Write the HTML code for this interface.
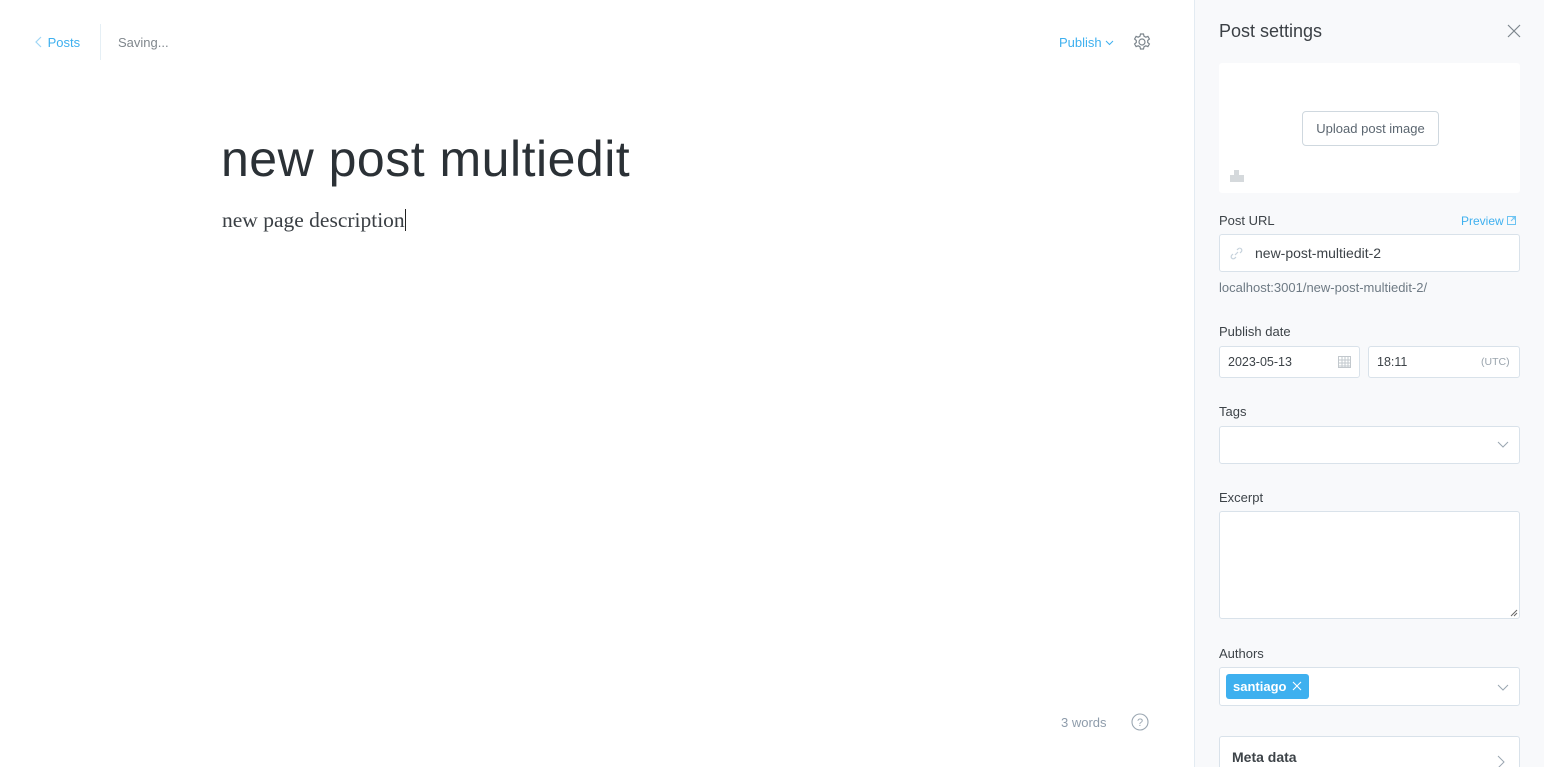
<!DOCTYPE html>
<html><head><meta charset="utf-8"><style>
*{box-sizing:border-box;margin:0;padding:0}
html,body{width:1544px;height:767px;overflow:hidden}
body{background:#fff;font-family:"Liberation Sans",sans-serif;position:relative}
.abs{position:absolute}
.side{left:1194px;top:0;width:350px;height:767px;background:#f8f9fb;border-left:1px solid #e3ebf2;overflow:hidden}
.lbl{position:absolute;left:24px;font-size:13px;color:#3d4348}
.box{position:absolute;left:24px;width:301px;background:#fff;border:1px solid #d9e2ea;border-radius:3px}
</style></head><body>
<div class="abs" style="left:34px;top:35px;font-size:13px;color:#3eb0ef">
<svg width="10" height="14" style="vertical-align:-2px"><path d="M7 2 L2 7 L7 12" stroke="#9fd6f5" fill="none" stroke-width="1.2"/></svg> Posts</div>
<div class="abs" style="left:100px;top:24px;width:1px;height:36px;background:#e5eff5"></div>
<div class="abs" style="left:118px;top:35px;font-size:13px;color:#80878d">Saving...</div>
<div class="abs" style="left:1059px;top:35px;font-size:13px;color:#3eb0ef">Publish <svg width="9" height="6" style="vertical-align:1px"><path d="M1 1 L4.5 4.5 L8 1" stroke="#3eb0ef" fill="none"/></svg></div>
<svg class="abs" style="left:1132px;top:32px" width="20" height="20" viewBox="0 0 20 20"><circle cx="10" cy="10" r="3" stroke="#7d868d" fill="none" stroke-width="1.2"/><path d="M8.5 2h3l.5 2.2 1.8 1 2.1-.8 1.5 2.6-1.7 1.5v2l1.7 1.5-1.5 2.6-2.1-.8-1.8 1-.5 2.2h-3l-.5-2.2-1.8-1-2.1.8-1.5-2.6 1.7-1.5v-2L2.6 7l1.5-2.6 2.1.8 1.8-1z" stroke="#7d868d" fill="none" stroke-width="1.2"/></svg>
<div class="abs" style="left:221px;top:130px;font-size:50px;color:#2b3136;letter-spacing:0.5px">new post multiedit</div>
<div class="abs" style="left:222px;top:208px;font-family:'Liberation Serif',serif;font-size:21.5px;color:#3a3f44">new page description<span style="display:inline-block;width:1px;height:22px;background:#222;vertical-align:-4px"></span></div>
<div class="abs" style="left:1061px;top:715px;font-size:13px;color:#8e9cab">3 words</div>
<svg class="abs" style="left:1131px;top:713px" width="18" height="18"><circle cx="9" cy="9" r="8" stroke="#9aa6b1" fill="none" stroke-width="1.1"/><text x="9" y="13" font-size="11" text-anchor="middle" fill="#9aa6b1" font-family="Liberation Sans">?</text></svg>

<div class="abs side">
<div class="abs" style="left:24px;top:21px;font-size:18px;color:#3b4045">Post settings</div>
<svg class="abs" style="left:312px;top:24px" width="14" height="14"><path d="M1 1L13 13M13 1L1 13" stroke="#7d868d" stroke-width="1.2"/></svg>
<div class="abs" style="left:24px;top:63px;width:301px;height:130px;background:#fff;border-radius:3px">
<div class="abs" style="left:83px;top:48px;width:137px;height:35px;border:1px solid #cfd8df;border-radius:4px;font-size:13px;color:#5b6670;text-align:center;line-height:33px">Upload post image</div>
<div class="abs" style="left:11px;top:112px;width:14px;height:7px;background:#d5d9dc"></div>
<div class="abs" style="left:15px;top:107px;width:5px;height:5px;background:#d5d9dc"></div>
</div>
<div class="lbl" style="top:213px">Post URL</div>
<div class="abs" style="left:266px;top:214px;font-size:12px;color:#3eb0ef">Preview <svg width="9" height="9" style="vertical-align:0"><rect x="0.5" y="0.5" width="8" height="8" fill="none" stroke="#6cc3f2"/><path d="M4 5L8 1M5 1h3v3" stroke="#6cc3f2" fill="none"/></svg></div>
<div class="box" style="top:234px;height:38px"><svg class="abs" style="left:10px;top:12px" width="13" height="13"><path d="M5 8L8 5M3 7L1.8 8.2a2 2 0 003 3L6 10M10 6l1.2-1.2a2 2 0 00-3-3L7 3" stroke="#c6d2dc" fill="none" stroke-width="1.2"/></svg><span class="abs" style="left:35px;top:10px;font-size:14px;color:#3d4348">new-post-multiedit-2</span></div>
<div class="abs" style="left:24px;top:280px;font-size:13px;color:#6e7a84">localhost:3001/new-post-multiedit-2/</div>
<div class="lbl" style="top:324px">Publish date</div>
<div class="box" style="top:346px;width:141px;height:32px"><span class="abs" style="left:8px;top:8px;font-size:12.5px;color:#3d4348">2023-05-13</span><svg class="abs" style="left:118px;top:8px" width="13" height="13"><rect x="0.5" y="1.5" width="12" height="11" fill="none" stroke="#c2c8cd"/><path d="M0 5h13M0 8h13M0 11h13M4 2v11M7 2v11M10 2v11" stroke="#c2c8cd"/></svg></div>
<div class="box" style="top:346px;left:173px;width:152px;height:32px"><span class="abs" style="left:8px;top:8px;font-size:12.5px;color:#3d4348">18:11</span><span class="abs" style="left:112px;top:9px;font-size:10.5px;color:#9aa4ad">(UTC)</span></div>
<div class="lbl" style="top:404px">Tags</div>
<div class="box" style="top:426px;height:38px"><svg class="abs" style="left:277px;top:14px" width="12" height="8"><path d="M1 1L6 6L11 1" stroke="#9aa6b1" fill="none"/></svg></div>
<div class="lbl" style="top:490px">Excerpt</div>
<div class="box" style="top:511px;height:108px"><svg class="abs" style="right:1px;bottom:1px" width="8" height="8"><path d="M7 1L1 7M7 4L4 7" stroke="#666"/></svg></div>
<div class="lbl" style="top:646px">Authors</div>
<div class="box" style="top:667px;height:39px"><div class="abs" style="left:6px;top:6px;width:83px;height:25px;background:#3eb0ef;border-radius:3px;color:#fff;font-size:13px;font-weight:bold;padding:5px 0 0 7px">santiago <svg width="10" height="10" style="vertical-align:0;margin-left:2px"><path d="M1 1L9 9M9 1L1 9" stroke="#fff" stroke-width="1.1"/></svg></div><svg class="abs" style="left:277px;top:16px" width="12" height="8"><path d="M1 1L6 6L11 1" stroke="#9aa6b1" fill="none"/></svg></div>
<div class="box" style="top:736px;height:50px"><span class="abs" style="left:12px;top:12px;font-size:14px;font-weight:bold;color:#3d4348">Meta data</span><svg class="abs" style="left:277px;top:18px" width="8" height="14"><path d="M1 1L7 7L1 13" stroke="#9aa6b1" fill="none"/></svg></div>
</div>
</body></html>
